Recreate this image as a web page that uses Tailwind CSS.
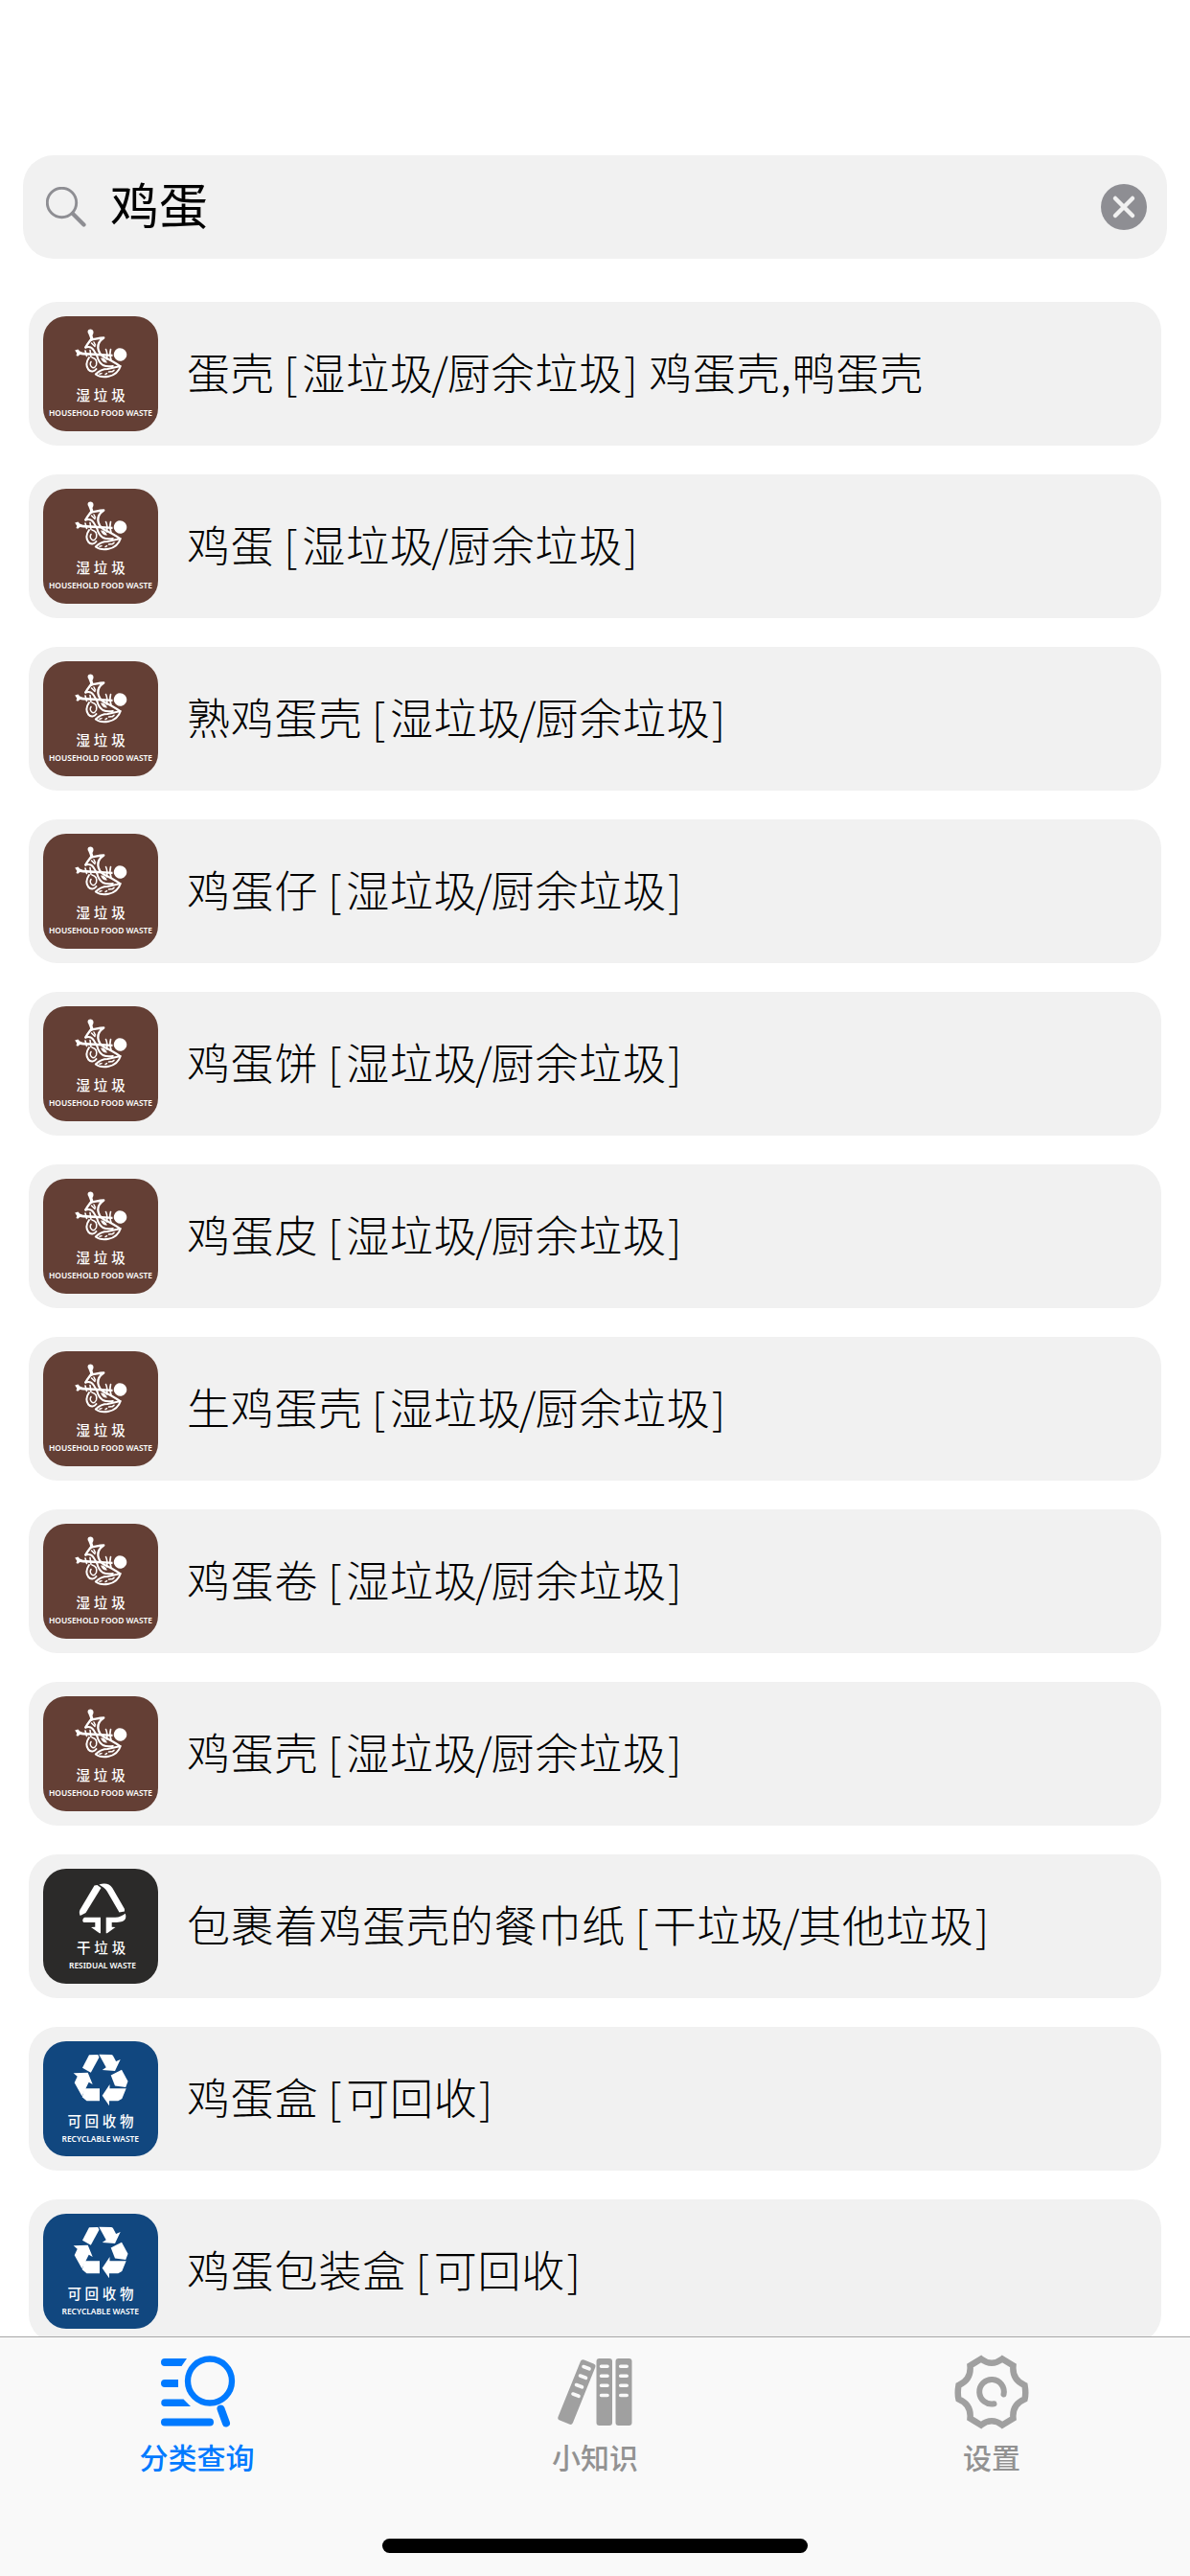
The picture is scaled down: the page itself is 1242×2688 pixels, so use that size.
<!DOCTYPE html>
<html lang="zh-CN">
<head>
<meta charset="utf-8">
<title>垃圾分类查询</title>
<script src="https://cdn.jsdelivr.net/npm/@tailwindcss/browser@4"></script>
</head>
<body class="bg-white font-['Noto_Sans_CJK_SC',sans-serif] text-black">

<!-- badge artwork shared by the result rows -->
<svg class="hidden" aria-hidden="true">
  <symbol id="food" viewBox="0 0 120 120">
    <g fill="#fff">
      <path d="M47.500 14c2-1.200 4.800-.3 5 2.200.2 1.600-.7 2.800-1 4l1.300 4.300-3.200 2c-.3-3-1-5.500-2.200-8-1.200-1.600-1.200-3.500.1-4.500z"/>
      <path d="M80 33.200c4 0 7.300 3 7.300 6.800s-3.300 6.800-7 6.800c-2.600 0-4.800-1.800-6-4.300-.7-1.600-.7-3.500 0-5 1-2.500 3-4.300 5.700-4.300z"/>
      <path d="M33.200 35.500l3.300-1 1.800 2 3.200 1.200 31 2v2.300l-31-1.600-3-.4-2.300 1.700-1.700-.7.800-2.300z"/>
      <path d="M60 43.500c3-.5 5.500 1.500 7 5-3.500.6-5.500-1.200-7-5z"/>
    </g>
    <g fill="none" stroke="#fff" stroke-width="2" stroke-linejoin="round" stroke-linecap="round">
      <path d="M44.300 32.500c1.500-3 3.700-5.500 5.500-8 4.200-.5 8.700-1.800 13.500-2-4.500 3-6.300 6.300-6 10.500.4 4.700 2.500 7 6 9.500 6.500 3 11.500 5.500 16.700 9.500" stroke-width="2.300"/>
      <path d="M44.300 32.500c4-1.300 6.700-.2 8.500 3l3.500 6c1 4.500 2.500 7 6 9.500 3.500 1.700 7 1.500 10.500 1"/>
      <path d="M50.500 28l3.500 3.500M53 27l1.500 3" stroke-width="1.500"/>
      <path d="M48 43c-3 4.500-3.300 9-.8 12.500 2.500 3 6.300 2.300 8.300-.5"/>
      <path d="M51 43c4 1 5.500 4 4.500 8-1 2-2.500 3-4 2.500M50 47.500c-1.300 2-.8 4 .8 5.500" stroke-width="1.500"/>
      <path d="M54.800 60.500c4-4 8-5.500 12.500-5.500l13.500-3c-2 6.300-6.300 9.500-12.500 10.800-5 1-9.800.5-13.500-2.300z"/>
      <path d="M59 60.300l2-.7m4 1l1.500-1m2-1.500l2.500-.3m1 0l2-1.500" stroke-width="1.500"/>
      <path d="M44 36l1.500 5.500M49 35.500l1 7M65.500 34.500c1.500 3 1.500 7 1 10.500M70.500 34.500c-1 3.500-.8 7.500.5 11" stroke-width="1.600"/>
    </g>
    <text x="60" y="88.300" text-anchor="middle" fill="#fff" font-size="14.500" font-weight="500" letter-spacing="3.800" dx="2">湿垃圾</text>
    <text x="6" y="104.300" fill="#fff" font-family="Noto Sans" font-size="9.200" font-weight="600" textLength="108" lengthAdjust="spacingAndGlyphs">HOUSEHOLD FOOD WASTE</text>
  </symbol>
  <symbol id="residual" viewBox="0 0 120 120">
    <g fill="#fff">
      <path d="M53.500 17.500l3-.5 4 3L44.500 46l-5.800 3c-1-2-1.200-4.300-.2-6.300z"/>
      <path d="M58.300 16.500c5.500-2 11-1.300 14 3.500L85 42v2.500l-5.500 1-12.800-22c-1.700-2.700-4.500-4.700-8.400-7z"/>
      <path d="M43.500 50.800H60v16.500h-1.200l-8.800-6.300 4.300-.3V56H42.700c-1.800-.5-2.200-3.800.8-5.200z"/>
      <path d="M65.700 50.700h9.500c4.500 0 7.500-2 10.700-4 1 3.500.3 6-1.500 7.300-2 1.500-5 2-12.700 2v4.700l3.800.3-8.600 6.300h-1.200z"/>
    </g>
    <text x="60.500" y="88.300" text-anchor="middle" fill="#fff" font-size="14.500" font-weight="500" letter-spacing="3.800" dx="2">干垃圾</text>
    <text x="27" y="104" fill="#fff" font-family="Noto Sans" font-size="9.200" font-weight="600" textLength="70" lengthAdjust="spacingAndGlyphs">RESIDUAL WASTE</text>
  </symbol>
  <symbol id="recycle" viewBox="0 0 120 120">
    <g fill="#fff">
      <path d="M48 14.300l9.200-.2 1.300 2.700-8.700 16-8.800-5.100z"/>
      <path d="M58.300 13.700l13 .2 1.500.8 3.300 6.300 4.600-2L75 31l-13.300-1 4-2.700z"/>
      <path d="M70.700 35.500l11.300-5.800 6.500 12-2.300 6.300-11.200-1.500z"/>
      <path d="M61.700 56.700L69.500 45v4.300h17.200L82.300 60l-4 2.300H69v5z"/>
      <path d="M43.300 49.300H59v13H45.500l-4.800-4z"/>
      <path d="M31.700 33.300l15-.6 5 12.300-4-2.300-7.200 14.500-7.800-13.900 3-6.600z"/>
    </g>
    <text x="59.800" y="89.300" text-anchor="middle" fill="#fff" font-size="14.500" font-weight="500" letter-spacing="3.700" dx="2">可回收物</text>
    <text x="19.500" y="105.300" fill="#fff" font-family="Noto Sans" font-size="9.200" font-weight="600" textLength="80.500" lengthAdjust="spacingAndGlyphs">RECYCLABLE WASTE</text>
  </symbol>
</svg>

<div class="flex h-[2688px] w-[1242px] flex-col overflow-hidden">
  <header class="shrink-0 px-6 pt-[162px] pb-[45px]">
    <div class="flex h-[108px] items-center rounded-[32px] bg-[#f1f1f1] pr-[21px] pl-[24px]">
      <svg class="size-[42px] shrink-0" viewBox="0 0 42 42" fill="none" stroke="#8e8e93"><circle cx="16.500" cy="16.500" r="15.200" stroke-width="2.900"/><path d="M28 28l11.500 11.500" stroke-width="4.300" stroke-linecap="round"/></svg>
      <span class="grow pb-[8px] pl-[25px] text-[51px] leading-[60px]">鸡蛋</span>
      <svg class="size-12 shrink-0" viewBox="0 0 48 48"><circle cx="24" cy="24" r="24" fill="#8e8e93"/><path d="M15 15l18 18M33 15l-18 18" stroke="#f1f1f1" stroke-width="4.500" stroke-linecap="round"/></svg>
    </div>
  </header>

  <main id="list" class="flex min-h-0 grow flex-col gap-[30px] overflow-hidden px-[30px]"></main>

  <nav class="flex h-[250px] shrink-0 flex-col border-t border-[#a7a7a7] bg-[#f9f9f9]">
    <div class="grid h-[210px] grid-cols-3 text-[30px] leading-[36px] font-medium text-[#929292]">
      <div class="flex flex-col items-center pt-[17px] pr-[3px] text-[#007aff]">
        <svg class="h-[80px] w-[84px]" viewBox="0 0 84 80" fill="none" stroke="currentColor">
          <g fill="currentColor" stroke="none">
            <path d="M8 5h23l-5.500 8H8a4 4 0 0 1 0-8zM8 27h14v8H8a4 4 0 0 1 0-8zM8 47.500h19.500l7.500 7.500H8a3.750 3.750 0 0 1 0-7.500z"/>
            <rect x="4" y="67.500" width="55" height="8" rx="4"/>
          </g>
          <circle cx="55" cy="28.500" r="23" stroke-width="6.300"/>
          <path d="M66.500 57.500l5.500 15" stroke-width="8" stroke-linecap="round"/>
        </svg>
        <span class="pt-[9px]">分类查询</span>
      </div>
      <div class="flex flex-col items-center pt-[17px]">
        <svg class="h-[80px] w-[84px]" viewBox="0 0 84 80">
          <g fill="#a0a0a0"><rect x="43.500" y="5" width="16.500" height="70" rx="3"/><rect x="63.500" y="5" width="17" height="70" rx="3"/><rect x="-8.300" y="-35" width="16.600" height="68" rx="3" transform="translate(22.500 41) rotate(22)"/></g>
          <g stroke="#f9f9f9" stroke-width="3.600" stroke-linecap="round"><path d="M48.500 13.300h6.500M48.500 23.300h6.500M48.500 33.300h6.500M48.500 43.500h6.500M68.700 13.300h6.500M68.700 23.300h6.500M68.700 33.300h6.500M68.700 43.500h6.500M30 13.500l6 2.300M26.500 23l6 2.300M22.500 32.500l6 2.300M19 42l6 2.300"/></g>
        </svg>
        <span class="pt-[9px]">小知识</span>
      </div>
      <div class="flex flex-col items-center pt-[17px]">
        <svg class="h-[80px] w-[84px]" viewBox="0 0 84 80" fill="none" stroke="#a0a0a0">
          <path stroke-width="6.500" d="M31 5.500Q42 14 53 5.500L64.500 12.500Q63 27 76.500 33Q78 41 76.500 47.500Q63 53 64.500 67.500L53 74.500Q42 66 31 74.500L19.500 67.500Q21 53 7.500 47.500Q6 41 7.500 33Q21 27 19.500 12.500Z"/>
          <path stroke-width="6" stroke-linecap="round" d="M54.500 42.500A12.800 12.800 0 1 0 44.500 52.300"/>
        </svg>
        <span class="pt-[9px]">设置</span>
      </div>
    </div>
    <div class="mx-auto h-[15px] w-[444px] rounded-full bg-black"></div>
  </nav>
</div>

<script>
  const wet = '湿垃圾/厨余垃圾';
  const items = [
    ['food', '蛋壳', wet, '鸡蛋壳,鸭蛋壳'],
    ['food', '鸡蛋', wet], ['food', '熟鸡蛋壳', wet], ['food', '鸡蛋仔', wet],
    ['food', '鸡蛋饼', wet], ['food', '鸡蛋皮', wet], ['food', '生鸡蛋壳', wet],
    ['food', '鸡蛋卷', wet], ['food', '鸡蛋壳', wet],
    ['residual', '包裹着鸡蛋壳的餐巾纸', '干垃圾/其他垃圾'],
    ['recycle', '鸡蛋盒', '可回收'], ['recycle', '鸡蛋包装盒', '可回收'],
  ];
  const tone = { food: 'bg-[#643f35]', residual: 'bg-[#2b2a29]', recycle: 'bg-[#11477f]' };
  const slash = '<span class="-mr-[2px] -ml-[2.5px]">/</span>';
  document.getElementById('list').innerHTML = items.map(([kind, name, type, alias]) => `
    <div class="flex h-[150px] shrink-0 items-center rounded-[30px] bg-[#f1f1f1] pl-[15px]">
      <svg class="size-[120px] shrink-0 rounded-[24px] ${tone[kind]}"><use href="#${kind}"/></svg>
      <span class="pb-1 pl-[30px] text-[45px] leading-[60px] font-light tracking-[0.8px] whitespace-pre">${name} <span class="-ml-px mr-[4px]">[</span>${type.replace('/', slash)}<span class="ml-[1.5px]">]</span>${alias ? ' ' + alias : ''}</span>
    </div>`).join('');
</script>
</body>
</html>
